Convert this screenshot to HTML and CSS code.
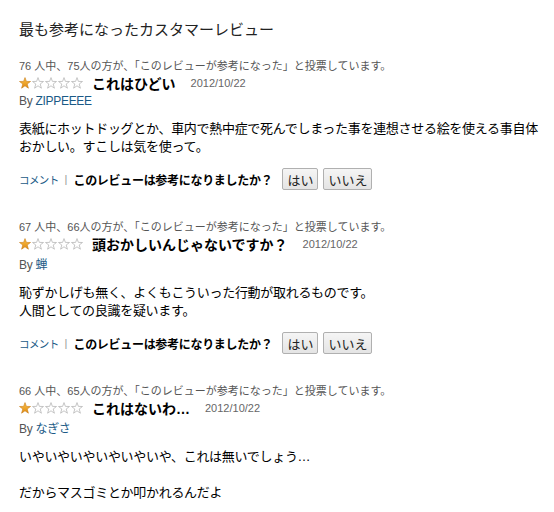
FILE: index.html
```html
<!DOCTYPE html>
<html lang="ja">
<head>
    <meta charset="UTF-8">
    <meta name="viewport" content="width=device-width, initial-scale=1.0">
    <title>最も参考になったカスタマーレビュー</title>
    <link rel="stylesheet" href="styles.css">
</head>
<body>
    <svg class="defs" width="0" height="0" aria-hidden="true">
        <defs>
            <linearGradient id="starFill" x1="0" y1="0" x2="0" y2="1">
                <stop offset="0" stop-color="#fbc24a"/>
                <stop offset="1" stop-color="#e08a10"/>
            </linearGradient>
            <symbol id="starOn" viewBox="0 0 12 12">
                <polygon points="6,0.6 7.4,4.4 11.5,4.5 8.2,7 9.4,11.2 6,8.8 2.6,11.2 3.8,7 0.5,4.5 4.6,4.4" fill="url(#starFill)" stroke="#c77a12" stroke-width="0.6"/>
            </symbol>
            <symbol id="starOff" viewBox="0 0 12 12">
                <polygon points="6,0.6 7.4,4.4 11.5,4.5 8.2,7 9.4,11.2 6,8.8 2.6,11.2 3.8,7 0.5,4.5 4.6,4.4" fill="#fff" stroke="#b8b8b8" stroke-width="0.8"/>
            </symbol>
        </defs>
    </svg>

    <div class="reviews">
        <h2>最も参考になったカスタマーレビュー</h2>

        <div class="review">
            <div class="votes">76 人中、75人の方が、「このレビューが参考になった」と投票しています。</div>
            <div class="headline">
                <svg class="stars" width="65" height="12" viewBox="0 0 65 12">
                    <use href="#starOn" x="0" width="12" height="12"/>
                    <use href="#starOff" x="13" width="12" height="12"/>
                    <use href="#starOff" x="26" width="12" height="12"/>
                    <use href="#starOff" x="39" width="12" height="12"/>
                    <use href="#starOff" x="52" width="12" height="12"/>
                </svg>
                <b class="summary">これはひどい</b>
                <span class="date">2012/10/22</span>
            </div>
            <div class="author">By <a href="#">ZIPPEEEE</a></div>
            <div class="text">表紙にホットドッグとか、車内で熱中症で死んでしまった事を連想させる絵を使える事自体<br>おかしい。すこしは気を使って。</div>
            <div class="actions">
                <a href="#" class="comment">コメント</a>
                <span class="sep">|</span>
                <b class="ask">このレビューは参考になりましたか？</b>
                <button class="vote">はい</button>
                <button class="vote">いいえ</button>
            </div>
        </div>

        <div class="review">
            <div class="votes">67 人中、66人の方が、「このレビューが参考になった」と投票しています。</div>
            <div class="headline">
                <svg class="stars" width="65" height="12" viewBox="0 0 65 12">
                    <use href="#starOn" x="0" width="12" height="12"/>
                    <use href="#starOff" x="13" width="12" height="12"/>
                    <use href="#starOff" x="26" width="12" height="12"/>
                    <use href="#starOff" x="39" width="12" height="12"/>
                    <use href="#starOff" x="52" width="12" height="12"/>
                </svg>
                <b class="summary">頭おかしいんじゃないですか？</b>
                <span class="date">2012/10/22</span>
            </div>
            <div class="author">By <a href="#">蝉</a></div>
            <div class="text">恥ずかしげも無く、よくもこういった行動が取れるものです。<br>人間としての良識を疑います。</div>
            <div class="actions">
                <a href="#" class="comment">コメント</a>
                <span class="sep">|</span>
                <b class="ask">このレビューは参考になりましたか？</b>
                <button class="vote">はい</button>
                <button class="vote">いいえ</button>
            </div>
        </div>

        <div class="review">
            <div class="votes">66 人中、65人の方が、「このレビューが参考になった」と投票しています。</div>
            <div class="headline">
                <svg class="stars" width="65" height="12" viewBox="0 0 65 12">
                    <use href="#starOn" x="0" width="12" height="12"/>
                    <use href="#starOff" x="13" width="12" height="12"/>
                    <use href="#starOff" x="26" width="12" height="12"/>
                    <use href="#starOff" x="39" width="12" height="12"/>
                    <use href="#starOff" x="52" width="12" height="12"/>
                </svg>
                <b class="summary">これはないわ…</b>
                <span class="date">2012/10/22</span>
            </div>
            <div class="author">By <a href="#">なぎさ</a></div>
            <div class="text">いやいやいやいやいやいや、これは無いでしょう…<br><br>だからマスゴミとか叩かれるんだよ</div>
            <div class="actions">
                <a href="#" class="comment">コメント</a>
                <span class="sep">|</span>
                <b class="ask">このレビューは参考になりましたか？</b>
                <button class="vote">はい</button>
                <button class="vote">いいえ</button>
            </div>
        </div>
    </div>
</body>
</html>
```

FILE: styles.css
```css
body {
    margin: 0;
    background: #fff;
    font-family: "Liberation Sans", "Noto Sans CJK JP", sans-serif;
    color: #000;
}
.defs {
    position: absolute;
}
.reviews {
    padding: 20px 8px 0 19px;
}
h2 {
    margin: 0 0 18px;
    font-size: 15px;
    line-height: 20px;
    font-weight: normal;
    color: #222;
}
.review {
    margin-bottom: 29px;
}
.votes {
    font-size: 11px;
    line-height: 16px;
    color: #555;
}
.headline {
    display: flex;
    align-items: center;
    height: 18px;
}
.stars {
    display: block;
    margin-right: 8px;
}
.summary {
    font-size: 14px;
    margin-right: 15px;
}
.date {
    font-size: 11px;
    color: #666;
}
/* line-height normal: a japanese name makes the row a little taller */
.author {
    font-size: 12px;
    line-height: normal;
    padding: 2px 0;
    color: #555;
    letter-spacing: -0.3px;
}
.author a,
.comment {
    color: #1a5a86;
    text-decoration: none;
}
.text {
    margin-top: 10px;
    font-size: 13px;
    line-height: 18px;
    letter-spacing: -0.3px;
}
.actions {
    display: flex;
    align-items: center;
    gap: 5px;
    margin-top: 12px;
    height: 22px;
}
.comment {
    font-size: 10.5px;
    letter-spacing: -0.6px;
}
.sep {
    font-size: 11px;
    color: #999;
    margin: 0 1px;
}
.ask {
    font-size: 12px;
    letter-spacing: -0.3px;
    margin-right: 5px;
}
.vote {
    height: 22px;
    padding: 0 4px;
    font-family: "Noto Sans CJK JP", sans-serif;
    font-size: 13px;
    color: #222;
    background: linear-gradient(#f5f5f5, #e4e4e4);
    border: 1px solid #b0b0b0;
    border-radius: 2px;
}
```
